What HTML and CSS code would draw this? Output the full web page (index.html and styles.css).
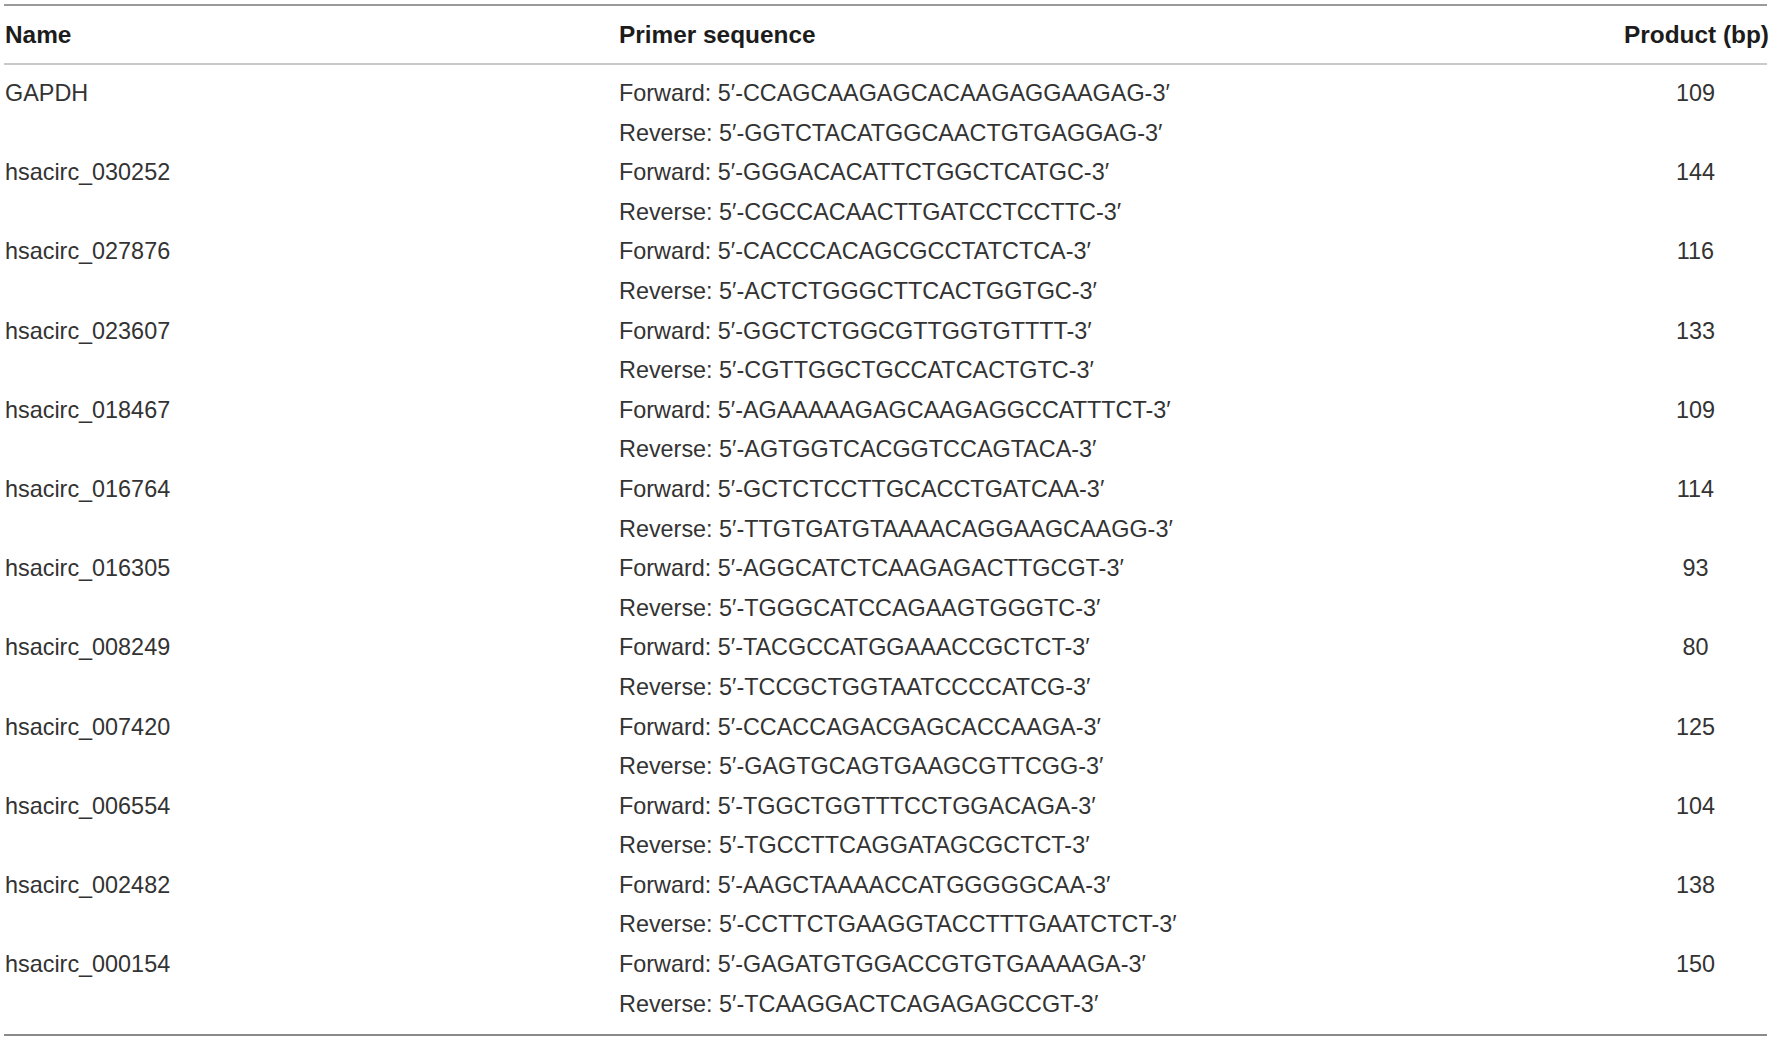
FILE: index.html
```html
<!DOCTYPE html>
<html>
<head>
<meta charset="utf-8">
<link rel="stylesheet" href="styles.css">
</head>
<body>
<table class="primers">
  <colgroup>
    <col class="c-name"><col class="c-seq"><col class="c-prod">
  </colgroup>
  <thead>
    <tr><th class="name">Name</th><th class="seq">Primer sequence</th><th class="prod">Product (bp)</th></tr>
  </thead>
  <tbody>
    <tr class="first"><td>GAPDH</td><td><div>Forward: 5′-CCAGCAAGAGCACAAGAGGAAGAG-3′</div><div>Reverse: 5′-GGTCTACATGGCAACTGTGAGGAG-3′</div></td><td class="prod">109</td></tr>
    <tr><td>hsacirc_030252</td><td><div>Forward: 5′-GGGACACATTCTGGCTCATGC-3′</div><div>Reverse: 5′-CGCCACAACTTGATCCTCCTTC-3′</div></td><td class="prod">144</td></tr>
    <tr><td>hsacirc_027876</td><td><div>Forward: 5′-CACCCACAGCGCCTATCTCA-3′</div><div>Reverse: 5′-ACTCTGGGCTTCACTGGTGC-3′</div></td><td class="prod">116</td></tr>
    <tr><td>hsacirc_023607</td><td><div>Forward: 5′-GGCTCTGGCGTTGGTGTTTT-3′</div><div>Reverse: 5′-CGTTGGCTGCCATCACTGTC-3′</div></td><td class="prod">133</td></tr>
    <tr><td>hsacirc_018467</td><td><div>Forward: 5′-AGAAAAAGAGCAAGAGGCCATTTCT-3′</div><div>Reverse: 5′-AGTGGTCACGGTCCAGTACA-3′</div></td><td class="prod">109</td></tr>
    <tr><td>hsacirc_016764</td><td><div>Forward: 5′-GCTCTCCTTGCACCTGATCAA-3′</div><div>Reverse: 5′-TTGTGATGTAAAACAGGAAGCAAGG-3′</div></td><td class="prod">114</td></tr>
    <tr><td>hsacirc_016305</td><td><div>Forward: 5′-AGGCATCTCAAGAGACTTGCGT-3′</div><div>Reverse: 5′-TGGGCATCCAGAAGTGGGTC-3′</div></td><td class="prod">93</td></tr>
    <tr><td>hsacirc_008249</td><td><div>Forward: 5′-TACGCCATGGAAACCGCTCT-3′</div><div>Reverse: 5′-TCCGCTGGTAATCCCCATCG-3′</div></td><td class="prod">80</td></tr>
    <tr><td>hsacirc_007420</td><td><div>Forward: 5′-CCACCAGACGAGCACCAAGA-3′</div><div>Reverse: 5′-GAGTGCAGTGAAGCGTTCGG-3′</div></td><td class="prod">125</td></tr>
    <tr><td>hsacirc_006554</td><td><div>Forward: 5′-TGGCTGGTTTCCTGGACAGA-3′</div><div>Reverse: 5′-TGCCTTCAGGATAGCGCTCT-3′</div></td><td class="prod">104</td></tr>
    <tr><td>hsacirc_002482</td><td><div>Forward: 5′-AAGCTAAAACCATGGGGGCAA-3′</div><div>Reverse: 5′-CCTTCTGAAGGTACCTTTGAATCTCT-3′</div></td><td class="prod">138</td></tr>
    <tr class="last"><td>hsacirc_000154</td><td><div>Forward: 5′-GAGATGTGGACCGTGTGAAAAGA-3′</div><div>Reverse: 5′-TCAAGGACTCAGAGAGCCGT-3′</div></td><td class="prod">150</td></tr>
  </tbody>
</table>
</body>
</html>
```
FILE: styles.css
```css
html, body {
  margin: 0;
  padding: 0;
  background: #ffffff;
}

body {
  padding: 4px 0 0 4px;
  font-family: "Liberation Sans", Arial, sans-serif;
  color: #333333;
}

.primers {
  width: 1763px;
  table-layout: fixed;
  border-collapse: collapse;
  border-top: 2px solid #9a9a9a;
  border-bottom: 2px solid #8a8a8a;
}

.c-name { width: 615px; }
.c-prod { width: 143px; }

.primers th {
  font-size: 24.4px;
  font-weight: bold;
  color: #1c1c1c;
  text-align: left;
  height: 57px;
  padding: 0;
  vertical-align: middle;
  border-bottom: 2px solid #c9c9c9;
}

.primers th.name { padding-left: 1px; }

.primers td {
  font-size: 23.4px;
  line-height: 39.6px;
  padding: 0;
  vertical-align: top;
}

.primers td:first-child { padding-left: 1px; }

.primers .prod { text-align: center; }

.primers th.prod { white-space: nowrap; }

.primers tr.first td { padding-top: 9px; }
.primers tr.last td { padding-bottom: 10px; }
```
